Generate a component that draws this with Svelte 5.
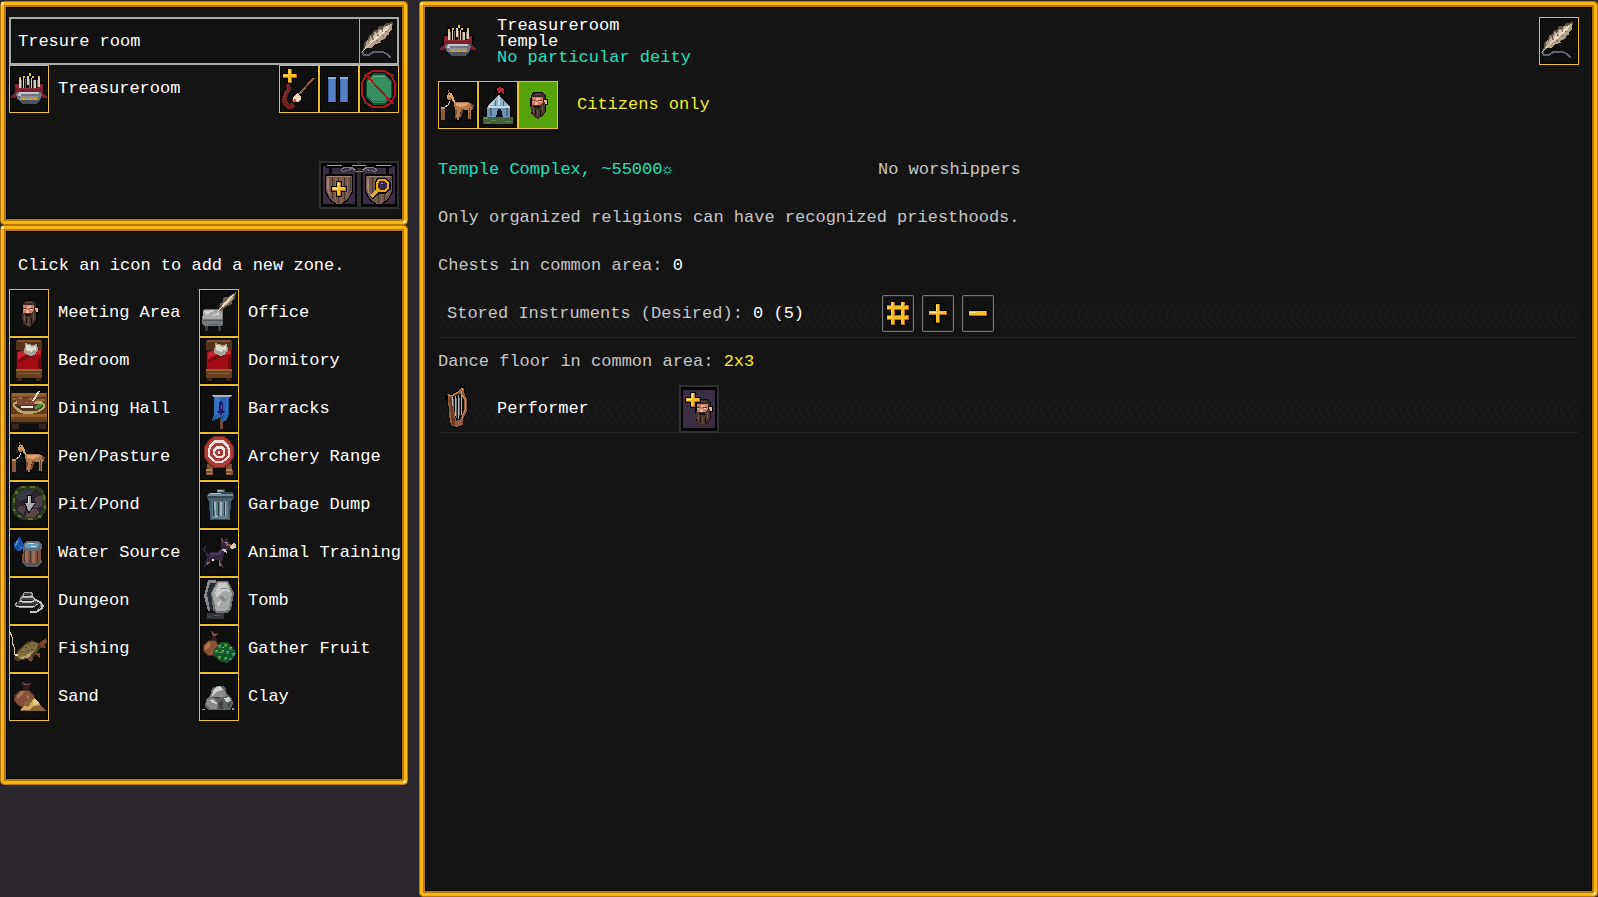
<script>
  let zoneName = 'Tresure room';

  // Each icon is a list of layers: [colour, path, stroke width].
  // Layers without a stroke width are filled.
  const altar = [
    ['#080808', 'M9 10h23v8h4v9l2 5h-5l-4 7H12l-5-7H2l2-5 2-9h3z'],
    ['#75202c', 'M6 19h5v4h18v-4h5v8l4 5v1h-5l-2-4H9l-2 4H2v-1l4-5z'],
    ['#8d2935', 'M6 20h3v3h22v-3h3v2l-3 2H9l-3-2z'],
    ['#d8d2c0', 'M10 14h2v9h-2zM14 13h1v10h-1zM18 11h2v9h-2zM22 13h1v10h-1zM25 15h2v8h-2zM29 13h2v9h-2z'],
    ['#806c58', 'M12 15h1v8h-1zM16 14h1v9h-1zM20 14h1v9h-1zM24 15h1v8h-1zM28 15h1v7h-1z'],
    ['#e8b83c', 'M10 12h2v2h-2zM14 11h2v2h-2zM20 8h2v3h-2zM23 11h2v2h-2zM29 11h2v2h-2z'],
    ['#6f737d', 'M8 27h24l1 3-2 5-4 4H13l-4-4-2-5z'],
    ['#c3c5ca', 'M10 27h20v2H10zM9 29h3v2H9z'],
    ['#50535e', 'M9 35h22l-4 4H13z'],
    ['#8f929a', 'M11 31h18v4H11z'],
    ['#d8a428', 'M13 33h3v2h-3zM17 34h2v1h-2zM20 33h3v2h-3zM25 33h3v2h-3z'],
  ];
  const feather = [
    ['#5f5142', 'M4 33l2-9 3-1 1-5 3-1 2-4h3l2-4h4l3-3 7-1-1 7-3 3v3l-4 1v3l-5 2v2l-7 2-4 3-4 1z'],
    ['#b3a38c', 'M6 31l2-8 2 2 1-6 3 2 1-6 3 1 2-4 3 1 2-4 3 1 5-3v5l-4 4 2 1-5 3 1 1-6 3 1 2-6 1-4 4z'],
    ['#d9ccb8', 'M11 26l1-4h3l1-5h3l2-4h3l2-3 6-3-3 5-5 5-6 5z'],
    ['#7a6957', 'M17 23l3 1-2 1zM22 18l4 1-2 1zM25 14h4l-2 1zM13 20l2 3h-2zM18 16l2 3h-2zM23 12l2 3h-2z'],
    ['#efe6d6', 'M3 35L12 26 30 10', 1],
    ['#5d606e', 'M3 35l2 3h5l4-3h10l4 2 4 4', 2],
  ];
  const plusAt = (x, y) => [
    ['#050505', `M${x + 4} ${y - 1}h6v5h5v6h-5v5h-6v-5h-5v-6h5z`],
    ['#b87010', `M${x + 5} ${y}h4v5h5v4h-5v5h-4v-5h-5v-4h5z`],
    ['#f8bd27', `M${x + 5} ${y}h3v5h5v3h-5v5h-3v-5h-5v-3h5z`],
    ['#ffe680', `M${x + 6} ${y + 1}h1v3h-1zM${x + 1} ${y + 6}h5v1h-5z`],
  ];
  const face = (x, y) => [
    ['#080808', `M${x + 3} ${y - 1}h10l3 4v3h2v6h-2v6l-3 5-5 3-2-1-5-4-1-14 1-4z`],
    ['#3b2a23', `M${x + 4} ${y}h8l3 3v4h-2v-3h-11v-2z`],
    ['#67483a', `M${x + 5} ${y + 1}h6v1h-6z`],
    ['#c97b66', `M${x + 2} ${y + 4}h11v8h-11z`],
    ['#efb299', `M${x + 6} ${y + 5}h4v2h-4zM${x + 14} ${y + 7}h3v4h-3zM${x + 5} ${y + 9}h3v3h-3z`],
    ['#7c342c', `M${x + 2} ${y + 7}h3v1h-3zM${x + 8} ${y + 7}h4v1h-4z`],
    ['#f0e8dc', `M${x + 3} ${y + 8}h1v1h-1zM${x + 9} ${y + 8}h2v1h-2z`],
    ['#46342c', `M${x + 1} ${y + 12}h10l2-3h2v9l-2 4-5 4-5-3-2-5z`],
    ['#70554a', `M${x + 3} ${y + 14}h1v6h-1zM${x + 7} ${y + 17}h1v7h-1zM${x + 12} ${y + 12}h1v7h-1z`],
    ['#1a110d', `M${x + 4} ${y + 13}h6v2h-6zM${x + 5} ${y + 17}h1v5h-1zM${x + 10} ${y + 17}h1v6h-1z`],
  ];
  const llama = [
    ['#080808', 'M9 7h2l1 3 4 2 1 8 13-1 5 2 2 5-1 4-1 10h-5v-8h-6l-2 9h-5l-2-11-1-11-5 1-3-3 1-3 2-2z'],
    ['#b27a4c', 'M10 8l2 4 3 2 2 7h13l4 2 1 4-2 2v9h-3v-9h-7l-2 10h-2l-2-10-2-11-5 1-2-2 3-4z'],
    ['#d8a270', 'M10 12h4v2h1l2 8-2-1-2-5-4 1v-1zM18 22h12v2l-7 2-5-1z'],
    ['#75472c', 'M17 29h2l-1 9h-1zM23 28h3l-3 9h-1zM31 27h1v11h-1zM34 22l2 3-1 3-2-3z'],
    ['#1b120c', 'M11 13h1v1h-1zM7 16h2v1H7z'],
    ['#8b5b39', 'M3 27h4v12H3z'],
    ['#c29b74', 'M3 26h4v2H3z'],
    ['#d8cfc0', 'M7 26l3-2 2-4', 1],
  ];
  const bed = [
    ['#573319', 'M7 4h26v10H7z'],
    ['#805029', 'M8 3h24v2H8z'],
    ['#300c0b', 'M7 13h26v20H7z'],
    ['#a30b15', 'M8 15l5-2h19v19H8z'],
    ['#c9252d', 'M9 16l5-2 5 3-5 2-5 3zM28 14h4v2l-5 2z'],
    ['#700910', 'M10 23l8-5h7v1l-6 2-9 4zM29 20h3v12h-3z'],
    ['#a6a296', 'M16 6l4 1 3 1 5-1 1 6-3 5-5 1-6-3z'],
    ['#deddd2', 'M17 8h3l2 2 5-1v5l-2-1-3 2-5-2z'],
    ['#65401f', 'M7 32h26v9H7z'],
    ['#936030', 'M7 32h26v2H7zM9 36h22v1H9z'],
    ['#3e2717', 'M8 41h5v3H8zM27 41h5v3h-5z'],
  ];
  const frame = [
    ['#303030', 'M0 0h40v48H0z'],
    ['#060606', 'M2 2h36v44H2z'],
    ['#3b2d42', 'M4 5h32v38H4z'],
  ];
  const shield = [
    ['#080808', 'M6 13h28v18l-5 9-7 4h-4l-7-4-5-9z'],
    ['#73564c', 'M7 15h26v15l-4 8-7 5h-4l-7-5-4-8z'],
    ['#a38474', 'M8 15h24v1H8zM8 17h2v13l2 4-2-1-2-5z'],
    ['#4a342f', 'M13 16h1v22h-1zM19 16h1v26h-1zM25 16h1v24h-1zM31 16h1v14h-1z'],
    ['#8b6c5f', 'M16 17h1v21h-1zM22 17h1v23h-1zM28 17h1v18h-1z'],
  ];

  const icons = {
    altar,
    feather,
    llama,
    bed,
    face: face(12, 12),
    paint: [
      ['#6f2023', 'M7 19h4l1 5-3 6-1 5 2 4 4-1 2 3-3 3H8l-4-4-1-5 2-7 3-4z'],
      ['#95302f', 'M8 19l1 5-3 6-1 6-1-2 1-5 3-5z'],
      ...plusAt(4, 4),
      ['#080808', 'M36 13L20 29', 3],
      ['#8f6044', 'M35 13L20 29', 2],
      ['#f2d5bd', 'M15 31l3-3 4 3v3l-3 3h-5v-4z'],
      ['#c96648', 'M13 35l4-1 1 3h-4z'],
    ],
    pause: [
      ['#080808', 'M8 11h10v27H8zM20 11h10v27H20z'],
      ['#5480c8', 'M9 12h8v25H9zM21 12h8v25h-8z'],
      ['#86aee6', 'M9 12h8v2H9zM21 12h8v2h-8z'],
      ['#3c61a4', 'M9 14h1v23H9zM16 14h1v23h-1zM21 14h1v23h-1zM28 14h1v23h-1z'],
    ],
    forbid: [
      ['#164d33', 'M14 8h12l7 8v16l-7 8H14l-7-8V16zM5 9h3v2H5zM32 9h3v2h-3zM5 37h3v2H5zM32 37h3v2h-3z'],
      ['#358f61', 'M14 10h12l6 7v14l-6 7H14l-6-7V17z'],
      ['#5cb584', 'M14 11h12v1H14zM9 17l4-5v2l-3 4z'],
      ['#1f6846', 'M10 31l4 5h12l4-5v1l-4 5H14l-4-5z'],
      ['#a51a1a', 'M14 6h11l7 4 4 8v12l-4 8-7 4H14l-7-4-4-8V18l4-8zM8 11l25 27', 2],
    ],
    signPlus: [
      ...frame,
      ...shield,
      ['#080808', 'M10 5h3v9h-3zM7 3h33v4H7z'],
      ['#9da0a0', 'M8 4h15v1H8zM33 4h7v1h-7z'],
      ['#7c8080', 'M40 10h-4l-3-4h-7l-4 3 2 2 4-2M29 10l4-3 4 2', 1],
      ...plusAt(13, 21),
    ],
    signFind: [
      ...frame,
      ...shield,
      ['#080808', 'M27 5h3v9h-3zM0 3h33v4H0z'],
      ['#9da0a0', 'M17 4h15v1H17zM0 4h7v1H0z'],
      ['#7c8080', 'M0 10h4l3-4h7l4 3-2 2-4-2M11 10L7 7 3 9', 1],
      ['#080808', 'M12 37l8-8M20 19h6l3 3v5l-3 3h-5l-3-3v-5z', 5],
      ['#e9a91c', 'M12 36l8-8', 3],
      ['#35284c', 'M20 19h6l3 3v5l-3 3h-5l-3-3v-5z'],
      ['#e9a91c', 'M20 19h6l3 3v5l-3 3h-5l-3-3v-5z', 2],
      ['#b3a4cf', 'M22 22h2v1h-2z'],
    ],
    tent: [
      ['#080808', 'M17 5h10v8l-3 1 9 9 1 13H7l1-12 9-11z'],
      ['#b92435', 'M19 7l3-1 4 2v5l-3-2-3 1z'],
      ['#91b6cc', 'M21 13l3 5 8 7H9l8-7z'],
      ['#6d94b1', 'M9 26h23v10H9z'],
      ['#c2dbe6', 'M20 15h2v9h-2zM15 20l2-2-2 6h-3zM10 25h22v2H10z'],
      ['#466882', 'M17 20h1v5h-1zM25 20h1v5h-1zM12 27h2v8h-2zM28 27h2v8h-2z'],
      ['#101018', 'M20 28h3l2 8h-7z'],
      ['#42613c', 'M5 36h30v7H5z'],
      ['#688655', 'M6 36h4v2H6zM13 39h5v1h-5zM24 36h7v1h-7zM9 41h3v1H9zM27 40h6v1h-6z'],
    ],
    dining: [
      ['#643d1c', 'M2 8h36v29H2z'],
      ['#96632f', 'M3 8h34v3H3zM3 13h10v2H3zM28 14h8v2h-8zM2 29h36v3H2z'],
      ['#7b4e25', 'M3 11h34v1H3zM2 33h36v1H2z'],
      ['#241811', 'M2 37h36v2H2z'],
      ['#3b2720', 'M3 39h7v5H3zM30 39h7v5h-7z'],
      ['#c0a26f', 'M4 18l4-2h24l4 3v4l-6 4-8 2h-7l-7-3-4-4z'],
      ['#4f351f', 'M6 19h28v3l-6 4H14l-7-4z'],
      ['#794831', 'M7 15l3-4 4 1 2 3 4-4h4l2 4-1 5H9z'],
      ['#a5684a', 'M10 12h3v2h-3zM20 13h3v2h-3zM16 17h3v1h-3z'],
      ['#4c8c3b', 'M25 22l5-3h4l-2 3-5 3z'],
      ['#e3e4df', 'M30 6l-6 10M12 22h12', 2],
      ['#c74b3b', 'M22 17h4v1h-4z'],
    ],
    office: [
      ['#3b3b3e', 'M6 34h3v8H6zM19 34h3v8h-3z'],
      ['#777a7c', 'M4 21l2-1h17l1 2v13l-2 2H5l-2-3z'],
      ['#a9abab', 'M5 21h15l3 3v6H4v-7z'],
      ['#d5d6d5', 'M6 22l10-1-9 5zM12 27l8-4v3z'],
      ['#55585a', 'M4 31h20v1H4zM10 35h10v1H10z'],
      ['#705e4d', 'M20 22l1-8h2l2-6h4l8-5-1 6-3 3v3l-6 3-4 3z'],
      ['#c2b299', 'M23 17l2-4h2l2-4 6-4-1 4-4 5-6 4z'],
      ['#efe6d7', 'M19 22L35 5', 1],
    ],
    barracks: [
      ['#704936', 'M21 33h3v11h-3z'],
      ['#2864b0', 'M15 12h15v17l-2 6-4 2-2-5-9 4 2-7z'],
      ['#3473c2', 'M16 12h5v14l-3 5-3-1zM27 13h2v15h-2z'],
      ['#174a89', 'M29 14h1v15h-1zM22 32l3-2-1 5z'],
      ['#a6b6c8', 'M13 10h20v1H13zM14 11h18v1H14z'],
      ['#24186d', 'M21 16h2l1 3v7h2l-1 2h-2v2h-2v-2h-2l-1-2h2v-7z'],
      ['#3978c0', 'M22 20h1v4h-1z'],
    ],
    archery: [
      ['#7d5032', 'M8 31h6v11H7zM27 31h6l1 11h-7z'],
      ['#b0855c', 'M7 36h6v2H7zM27 36h6v2h-6zM8 40h6v1H8zM27 40h5v1h-5z'],
      ['#7e241f', 'M15 3h10l6 4 4 7v10l-4 7-6 4H15l-6-4-4-7V14l4-7z'],
      ['#aa3e39', 'M16 4h8l6 4 4 7v8l-4 7-6 4h-8l-6-4-4-7v-8l4-7z'],
      ['#eee0dc', 'M16 7h8l5 4 2 5v7l-3 4-5 3h-6l-5-3-3-4v-7l2-5z'],
      ['#a93a36', 'M17 10h6l4 3 2 4v5l-3 4-4 2h-5l-3-2-3-4v-5l2-4z'],
      ['#f3e7e2', 'M17 13h6l3 3v6l-3 3h-6l-3-3v-6z'],
      ['#a93a36', 'M18 16h4l2 2v3l-2 2h-4l-2-2v-3z'],
      ['#f3e7e2', 'M19 18h2v3h-2z'],
    ],
    pit: [
      ['#2b3c1d', 'M12 5h16l6 4 3 7v13l-4 7-6 3H13l-7-4-3-7V15l4-7z'],
      ['#52702f', 'M12 5h4v2h-4zM21 5h5v2h-5zM6 10h3v3H6zM4 17h2v5H4zM34 14h2v5h-2zM35 24h2v4h-2zM4 28h3v2H4zM9 34h4v2H9zM19 37h5v2h-5zM29 34h3v3h-3z'],
      ['#29272d', 'M13 8h14l6 5 1 15-6 8H13l-7-7V15z'],
      ['#393b44', 'M13 9h12l-6 8-9 3-3-4z'],
      ['#514247', 'M26 17l7-3v11l-8 3zM9 26l8-2-2 10-6-4z'],
      ['#5c4849', 'M20 28h8l2 4-5 4h-9z'],
      ['#111114', 'M18 14h5v7h4l-7 12-6-12h4z'],
      ['#a7a7ad', 'M19 15h3v7h4l-6 9-4-9h3z'],
      ['#e2e2e2', 'M19 15h1v8h-1z'],
    ],
    water: [
      ['#080808', 'M15 12h16l3 4v18l-5 5H17l-5-5V16z'],
      ['#7c5140', 'M14 17h18v18l-4 3H17l-4-4z'],
      ['#a06b54', 'M16 19h3v16h-3zM23 20h3v16h-3z'],
      ['#49312c', 'M15 19h1v16h-1zM21 20h1v17h-1zM28 19h1v17h-1z'],
      ['#666a73', 'M17 12h12l4 3v5l-4 2H17l-4-2v-4z'],
      ['#62a2bf', 'M17 14h11l2 2-3 3h-9l-3-2z'],
      ['#b6dcf0', 'M19 14h6v1h-6zM22 17h5v1h-5z'],
      ['#555962', 'M13 31l5 3h10l5-3v3l-5 4H18l-5-4z'],
      ['#1750a5', 'M10 7l2 3 3 6-1 4-3 2H8l-3-3v-4l3-4z'],
      ['#4f98e0', 'M9 10v3l-2 4H6l1-4zM11 18h2v1h-2z'],
    ],
    dungeon: [
      ['#3e3f40', 'M14 16h8l3 4 4 7-3 4H10l-4-4 4-4 2-5z'],
      ['#a9aaa8', 'M14 17l2-2h6l2 3-3 2h-6zM11 22l3-2h10l2 3-3 2H13zM8 25l-2 3 4 2h14l5-3', 1],
      ['#d3d3d0', 'M13 19h11M10 24h15M7 29h18', 1],
      ['#202123', 'M15 18h5v1h-5zM13 23h10v1H13zM11 27h14v1H11z'],
      ['#c5c5c2', 'M25 22l6 3 3 4-2 3-5 3h-6', 2],
      ['#606161', 'M26 24l5 3 1 2-4 4', 1],
    ],
    fishing: [
      ['#d1ccad', 'M1 7l2 5v5l2 5v5l2 5', 1],
      ['#4b3d22', 'M5 34l4-9 7-7 7-3 7 3 7-5 1 4-2 3 1 3h-6l-4 7-4 3-5 1-10 2z'],
      ['#7e713f', 'M8 31l2-5 7-6 6-3 6 2-2 7-8 6-9 2z'],
      ['#b0a16b', 'M10 32l6-1 8-5-3 6-8 2z'],
      ['#474d2e', 'M12 26h2v1h-2zM16 22h2v1h-2zM20 20h2v1h-2zM24 20h2v1h-2zM18 25h2v1h-2zM22 24h2v1h-2z'],
      ['#834329', 'M30 18l7-4 1 3-3 2 2 4-5-1zM18 33l5-2 1 4-3 2zM27 28h4v5l-3-2z'],
      ['#ece3c5', 'M7 29h2v2H7z'],
    ],
    sand: [
      ['#2f1f22', 'M13 9l4 1 1-3 1 3 4-1-3 6v2h-6v-3z'],
      ['#4d2b20', 'M11 17h10l5 6v7l-5 4h-9l-5-3-2-4v-5z'],
      ['#86503a', 'M12 18h8l4 5v6l-4 4h-8l-5-3-1-4 1-4z'],
      ['#ad7153', 'M12 18h4l-3 5-5 3v-4zM18 22h2v4h-2z'],
      ['#79504a', 'M13 9l4 2 5-1-3 2h-4z'],
      ['#8a6338', 'M16 29l9-5 12 14H11z'],
      ['#d0aa5e', 'M11 37l5-4 3 1 6-9 6 7-8 2-2 3z'],
      ['#e8cd89', 'M24 28l2-3 4 5-6 2z'],
    ],
    garbage: [
      ['#344850', 'M18 8h8v3h8l1 6-3 3-1 19H11l-1-19-2-3 1-5h9z'],
      ['#738b94', 'M18 9h7v2h-7zM9 13h25v2H9z'],
      ['#adbac0', 'M11 12h11v1H11zM19 9h4v1h-4z'],
      ['#465f6b', 'M9 17h24v3H9z'],
      ['#647e89', 'M12 20h18v18H12z'],
      ['#a4b3b9', 'M15 21h2v12l2 3h-3zM21 21h2v14h-2zM26 21h1v14h-1z'],
      ['#263941', 'M14 21h1v15l-1-2zM19 21h1v14h-1zM25 21h1v14h-1z'],
      ['#406477', 'M11 19h2v20h-2zM29 20h2v19h-2z'],
    ],
    animal: [
      ['#32263c', 'M7 17l-1 4 3 4 3-2h7l3-4v-5l1-6 2 4 3-4 2 5 2 3 3 1-2 4h-6l-3 7-1 7 2 4h-2l-3-8h-6l-6 3-1 4H5l3-9-1-5-3-2 1-5z'],
      ['#4d3955', 'M11 24h7l5-5 1 3-4 4-8 1zM23 12l1 2-1 3z'],
      ['#925f48', 'M22 8l2 4-1 2zM27 13h2v2h3v2h-5zM20 30l3 7h-3zM8 33h3l-3 3z'],
      ['#d6cbb7', 'M31 17l4-3 2 2v3l-5 1zM23 20h4l1 4-3-1z'],
      ['#efe9df', 'M13 30h2v2h-2zM26 13h1v1h-1z'],
    ],
    tomb: [
      ['#33353a', 'M8 36h17v6H8z'],
      ['#51535a', 'M9 39h3v1H9zM15 38h7v1h-7z'],
      ['#85898e', 'M9 3h8v3h-5l-4 10 3 14v4H9L5 19z'],
      ['#282c34', 'M11 6h6l-2 30-4-4-3-15z'],
      ['#707274', 'M18 4h11l6 12-3 17-4 3H17l-3-4-2-16z'],
      ['#a7a8a7', 'M19 5h9l5 11-3 16-4 2h-9l-4-18z'],
      ['#cacac6', 'M20 6h7l4 9-7-1-6 7-2-5zM18 26l5-4-3 8z'],
      ['#86898a', 'M19 20l4-1 4 3 3-2-4 5-4-2zM22 11h6v1h-6z'],
    ],
    fruit: [
      ['#2f1f22', 'M12 6l3 2h5l-3 4 1 4h-6l1-4z'],
      ['#85564b', 'M12 6l3 3h4l-3 2h-2z'],
      ['#47291f', 'M9 15h8l4 6v7l-4 3H9l-5-4v-7z'],
      ['#8d5336', 'M9 16h7l4 6v5l-5 3H9l-4-4v-6z'],
      ['#b27952', 'M9 18h3l-2 5-4 2v-4z'],
      ['#165532', 'M21 17h7l5 4 4 7-3 6-6 4-8-2-6-6 1-6 4-3z'],
      ['#368e3e', 'M19 20h3v3h-3zM25 19h3v3h-3zM30 22h3v3h-3zM16 25h3v3h-3zM22 25h3v3h-3zM27 26h3v3h-3zM33 28h3v3h-3zM19 31h3v3h-3zM25 32h3v3h-3zM30 33h3v2h-3z'],
      ['#74b94b', 'M20 20h2v1h-2zM26 19h2v1h-2zM31 22h2v1h-2zM17 25h2v1h-2zM23 25h2v1h-2zM28 26h2v1h-2zM34 28h2v1h-2zM20 31h2v1h-2zM26 32h2v1h-2zM23 22h2v1h-2zM20 27h2v1h-2z'],
    ],
    clay: [
      ['#606162', 'M13 15l5-2h6l3 3 1 5 5 4 1 6-3 6H10l-4-3 1-8 4-3z'],
      ['#8b8d8c', 'M14 16l7-3 4 3 2 7-5 2-11-1zM8 26l6-1 5 5-1 6h-7l-4-4z'],
      ['#d0d1ce', 'M15 16l5-3 4 4-7 2-4 4zM10 27h5l3 4-4-1zM25 25l5-1 2 4-5 1z'],
      ['#3e4041', 'M19 31l3-4 2 2v7h-3zM14 24h7v1h-7zM28 31l4-1-2 5z'],
      ['#9a9b99', 'M3 36h3v1H3zM33 35h2v2h-2z'],
    ],
    harp: [
      ['#080808', 'M8 8h4l7-2 3-5h6l-1 5 3 7v14l-4 7v7l-10 2-4-4-3-22-2-2z'],
      ['#945b3a', 'M9 9l5 1 5-3 4-4h3v4l3 7v12l-4 8v6l-7 2-5-2-2-10-1-19z'],
      ['#101010', 'M14 12l6-3h4l2 7v8l-3 10-5 2z'],
      ['#cb9060', 'M10 10h5l5-3 4-4 1 1-2 4 4 7v10l-3 8', 1],
      ['#6d3c25', 'M11 12h2l4 24v4h-3z'],
      ['#b5b5b3', 'M14 12v9M17 11v20M20 10v24M23 10v20', 1],
      ['#66676a', 'M15 14v12M18 13v20M21 13v18', 1],
    ],
    assign: [
      ...frame,
      ...face(16, 15),
      ...plusAt(7, 8),
    ],
    hash: [
      ['#050505', 'M8 5h6v4h4V5h6v4h4v6h-3v4h3v7h-4v5h-6v-5h-4v5H8v-5H4v-7h4v-4H4V9h4z'],
      ['#b87010', 'M9 7h4v23H9zM19 7h4v23h-4zM5 10h22v5H5zM5 20h22v5H5z'],
      ['#f5bd27', 'M9 7h3v22H9zM19 7h3v22h-3zM5 11h21v3H5zM5 21h21v3H5z'],
      ['#ffe680', 'M10 8h1v3h-1zM20 8h1v3h-1zM6 12h4v1H6zM6 22h4v1H6z'],
    ],
    more: [
      ['#050505', 'M12 8h7v7h7v7h-7v8h-7v-8H6v-7h6z'],
      ['#b87010', 'M14 9h4v7h7v4h-7v8h-4v-8H7v-4h7z'],
      ['#f5bd27', 'M14 9h3v7h7v3h-7v8h-3v-8H7v-3h7z'],
      ['#ffe680', 'M14 10h1v6h-1zM8 17h7v1H8z'],
    ],
    less: [
      ['#050505', 'M6 15h20v7H6z'],
      ['#b87010', 'M7 16h18v5H7z'],
      ['#f5bd27', 'M7 16h17v4H7z'],
      ['#ffe680', 'M8 17h6v1H8z'],
    ],
  };

  // Listed top to bottom, first column then second
  const zones = [
    { label: 'Meeting Area', icon: 'face' },
    { label: 'Bedroom', icon: 'bed' },
    { label: 'Dining Hall', icon: 'dining' },
    { label: 'Pen/Pasture', icon: 'llama' },
    { label: 'Pit/Pond', icon: 'pit' },
    { label: 'Water Source', icon: 'water' },
    { label: 'Dungeon', icon: 'dungeon' },
    { label: 'Fishing', icon: 'fishing' },
    { label: 'Sand', icon: 'sand' },
    { label: 'Office', icon: 'office' },
    { label: 'Dormitory', icon: 'bed' },
    { label: 'Barracks', icon: 'barracks' },
    { label: 'Archery Range', icon: 'archery' },
    { label: 'Garbage Dump', icon: 'garbage' },
    { label: 'Animal Training', icon: 'animal' },
    { label: 'Tomb', icon: 'tomb' },
    { label: 'Gather Fruit', icon: 'fruit' },
    { label: 'Clay', icon: 'clay' },
  ];
</script>

{#snippet icon(name, w = 40, h = 48)}
  <svg width={w} height={h} viewBox="0 0 {w} {h}" shape-rendering="crispEdges" aria-hidden="true">
    {#each icons[name] as [color, d, stroke]}
      <path {d} fill={stroke ? 'none' : color} stroke={stroke ? color : 'none'} stroke-width={stroke} />
    {/each}
  </svg>
{/snippet}

<div class="screen">
  <aside>
    <section class="panel current">
      <div class="name-row">
        <input type="text" aria-label="Zone name" bind:value={zoneName} />
        <button class="rename" aria-label="Rename">{@render icon('feather')}</button>
      </div>
      <div class="zone-row">
        <button class="tile" aria-label="Temple">{@render icon('altar')}</button>
        <span class="label">Treasureroom</span>
        <button class="tile" aria-label="Repaint zone">{@render icon('paint')}</button>
        <button class="tile" aria-label="Suspend zone">{@render icon('pause')}</button>
        <button class="tile" aria-label="Remove zone">{@render icon('forbid')}</button>
      </div>
      <div class="signs">
        <button aria-label="Add location">{@render icon('signPlus')}</button>
        <button aria-label="Find location">{@render icon('signFind')}</button>
      </div>
    </section>

    <section class="panel picker">
      <p>Click an icon to add a new zone.</p>
      <div class="zones">
        {#each zones as zone}
          <button class="zone">
            <span class="tile">{@render icon(zone.icon)}</span>
            <span class="label">{zone.label}</span>
          </button>
        {/each}
      </div>
    </section>
  </aside>

  <main class="panel details">
    <header>
      {@render icon('altar')}
      <div class="title">
        <h1>Treasureroom</h1>
        <div>Temple</div>
        <div class="teal">No particular deity</div>
      </div>
      <button class="tile" aria-label="Rename location">{@render icon('feather')}</button>
    </header>

    <div class="access">
      <button class="tile" aria-label="All visitors">{@render icon('llama')}</button>
      <button class="tile" aria-label="Residents">{@render icon('tent')}</button>
      <button class="tile selected" aria-label="Citizens only" aria-pressed="true">{@render icon('face')}</button>
      <span class="yellow">Citizens only</span>
    </div>

    <div class="status">
      <span class="teal">Temple Complex, ~55000☼</span>
      <span>No worshippers</span>
    </div>
    <p>Only organized religions can have recognized priesthoods.</p>
    <p>Chests in common area: <span class="white">0</span></p>

    <div class="strip instruments">
      <span class="name">Stored Instruments (Desired): <span class="white">0 (5)</span></span>
      <button class="step" aria-label="Set desired amount">{@render icon('hash', 32, 37)}</button>
      <button class="step" aria-label="Increase">{@render icon('more', 32, 37)}</button>
      <button class="step" aria-label="Decrease">{@render icon('less', 32, 37)}</button>
    </div>
    <p class="dance">Dance floor in common area: <span class="yellow">2x3</span></p>
    <div class="strip performer">
      {@render icon('harp')}
      <span class="name white">Performer</span>
      <button aria-label="Assign performer">{@render icon('assign')}</button>
    </div>
  </main>
</div>

<style>
  :global(body) {
    background: #2b252c;
  }

  .screen {
    box-sizing: border-box;
    display: flex;
    gap: 11px;
    min-height: 100vh;
    padding-top: 1px;
    color: #c6c6c6;
    font: 17px/16px 'Liberation Mono', monospace;
  }

  aside {
    flex: none;
    width: 408px;
  }

  .panel {
    position: relative;
    box-sizing: border-box;
    background: #141414;
    border: 1px solid #b8760f;
    border-radius: 4px;
    box-shadow:
      inset 0 0 0 3px #f9b512,
      inset 0 0 0 5px #b8790c,
      inset 0 0 0 6px #050505;
  }

  /* Glints on the gold corners */
  .panel::before,
  .panel::after {
    content: '';
    position: absolute;
    width: 3px;
    height: 3px;
    background: #ffe9a0;
    border-radius: 2px;
  }

  .panel::before {
    top: 0;
    left: 0;
  }

  .panel::after {
    right: 1px;
    bottom: 1px;
  }

  button,
  input {
    margin: 0;
    padding: 0;
    border: 0;
    background: none;
    color: inherit;
    font: inherit;
    text-align: left;
  }

  button {
    cursor: pointer;
  }

  svg {
    display: block;
    flex: none;
  }

  p,
  h1 {
    margin: 0;
    font: inherit;
  }

  .white,
  .label {
    color: #fff;
  }

  .yellow {
    color: #f2ee28;
  }

  .tile {
    flex: none;
    width: 40px;
    height: 48px;
    background: #0f0f0f;
    box-shadow: inset 0 0 0 1px #e8bf2a, inset 0 0 0 2px #050505;
  }

  .tile.selected {
    background: #57a30c;
    box-shadow: inset 0 0 0 1px #e8bf2a;
  }

  .current {
    padding: 15px 8px;
  }

  .name-row {
    display: flex;
    height: 48px;
    background: #111;
    box-shadow: inset 0 0 0 2px #aaa;
  }

  .name-row input {
    flex: 1;
    min-width: 0;
    padding-left: 9px;
    color: #fff;
    outline: none;
  }

  .rename {
    box-shadow: inset 1px 0 0 #aaa;
  }

  .zone-row {
    display: flex;
    align-items: center;
  }

  .zone-row .label {
    flex: 1;
    padding-left: 9px;
  }

  .signs {
    display: flex;
    justify-content: flex-end;
    margin-top: 48px;
  }

  .picker {
    padding: 32px 0 63px 8px;
  }

  .picker p {
    padding-left: 9px;
    color: #fff;
  }

  .zones {
    display: grid;
    grid-template-columns: 190px 1fr;
    grid-template-rows: repeat(9, 48px);
    grid-auto-flow: column;
    margin-top: 15px;
  }

  .zone {
    display: flex;
    align-items: center;
    gap: 9px;
    white-space: nowrap;
  }

  .details {
    flex: 1;
    min-width: 0;
    padding: 15px 18px;
  }

  header {
    display: flex;
  }

  .title {
    flex: 1;
    padding: 1px 0 0 19px;
    color: #fff;
  }

  .teal,
  .title .teal {
    color: #1fe0bd;
  }

  .access {
    display: flex;
    align-items: center;
    margin-top: 15px;
  }

  .access .yellow {
    padding-left: 19px;
  }

  .status {
    display: grid;
    grid-template-columns: 440px 1fr;
    margin-top: 33px;
  }

  .details p {
    margin-top: 32px;
  }

  .strip {
    display: flex;
    align-items: center;
    box-sizing: border-box;
    height: 48px;
    border-bottom: 1px solid #222;
    background:
      repeating-linear-gradient(125deg, transparent 0 2px, #181818 2px 4px, transparent 4px 6px) 0 12px / 100% 13px no-repeat,
      repeating-linear-gradient(55deg, transparent 0 2px, #191919 2px 4px, transparent 4px 6px) 0 25px / 100% 13px no-repeat;
  }

  .instruments {
    gap: 8px;
    margin-top: 16px;
  }

  .instruments .name {
    box-sizing: border-box;
    width: 436px;
    padding-left: 9px;
  }

  .step {
    background: #111;
    border-radius: 2px;
    box-shadow: inset 0 0 0 1px #777, inset 0 0 0 2px #222;
  }

  .details .dance {
    margin-top: 16px;
  }

  .performer {
    margin-top: 15px;
  }

  .performer .name {
    box-sizing: border-box;
    width: 201px;
    padding-left: 19px;
  }
</style>
